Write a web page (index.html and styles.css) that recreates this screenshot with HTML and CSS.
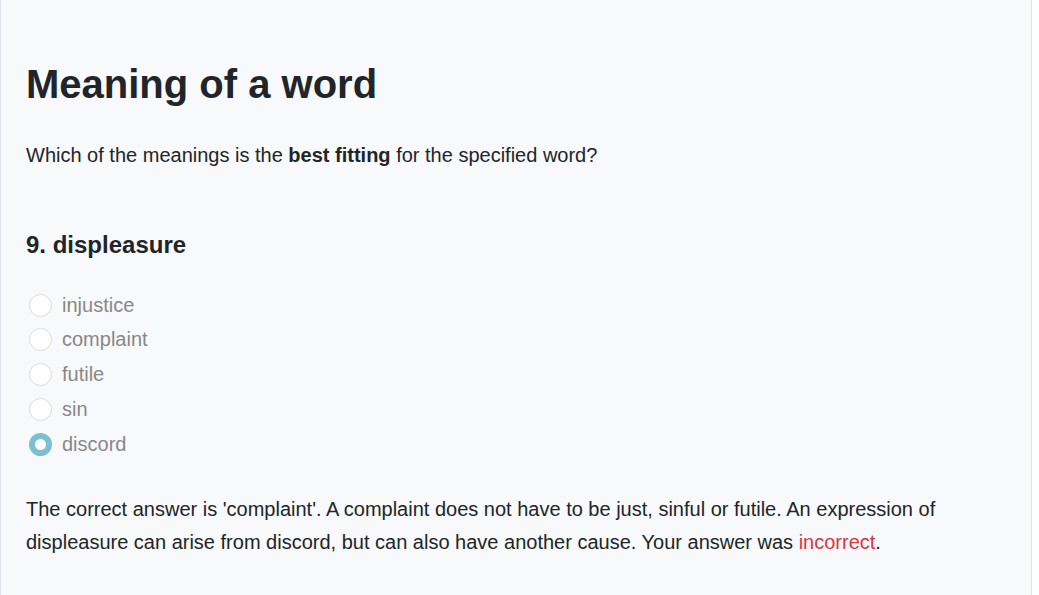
FILE: index.html
```html
<!DOCTYPE html>
<html lang="en">
<head>
  <meta charset="utf-8">
  <meta name="viewport" content="width=device-width, initial-scale=1.0">
  <title>Meaning of a word</title>
  <link rel="stylesheet" href="styles.css">
</head>
<body>
  <div class="container">
    <h1>Meaning of a word</h1>
    <p class="intro">Which of the meanings is the <strong>best fitting</strong> for the specified word?</p>

    <div class="question">
      <h3>9. displeasure</h3>

      <div class="options">
        <label class="option">
          <input type="radio" name="q9" value="injustice" disabled>
          <span>injustice</span>
        </label>
        <label class="option">
          <input type="radio" name="q9" value="complaint" disabled>
          <span>complaint</span>
        </label>
        <label class="option">
          <input type="radio" name="q9" value="futile" disabled>
          <span>futile</span>
        </label>
        <label class="option">
          <input type="radio" name="q9" value="sin" disabled>
          <span>sin</span>
        </label>
        <label class="option">
          <input type="radio" name="q9" value="discord" checked disabled>
          <span>discord</span>
        </label>
      </div>

      <p class="explanation">The correct answer is 'complaint'. A complaint does not have to be just, sinful or futile. An expression of displeasure can arise from discord, but can also have another cause. Your answer was <span class="wrong">incorrect</span>.</p>
    </div>
  </div>
</body>
</html>
```

FILE: styles.css
```css
* {
  box-sizing: border-box;
  margin: 0;
  padding: 0;
}

body {
  background: #fff;
  font-family: "Liberation Sans", Arial, sans-serif;
  color: #212529;
}

.container {
  width: 1032px;
  min-height: 100vh;
  background-color: #f8f9fa;
  border-left: 1px solid #dee2e6;
  border-right: 1px solid #dee2e6;
  padding: 60px 25px 40px;
}

h1 {
  font-size: 40px;
  font-weight: 700;
  line-height: 1.2;
  margin-bottom: 31px;
}

.intro,
.explanation {
  font-size: 20px;
  line-height: 33px;
}

.question h3 {
  font-size: 24px;
  font-weight: 700;
  line-height: 1.2;
  margin-top: 59px;
  margin-bottom: 28px;
}

.options {
  display: flex;
  flex-direction: column;
  margin-bottom: 31px;
}

.option {
  display: flex;
  align-items: center;
  gap: 10px;
  height: 34.75px;
  padding-left: 3px;
  font-size: 20px;
  color: #888;
}

.option input {
  appearance: none;
  -webkit-appearance: none;
  width: 23px;
  height: 23px;
  border-radius: 50%;
  border: 1px solid #dcdcdc;
  background: #fff;
  flex-shrink: 0;
}

.option input:checked {
  border: 6px solid #7cbfd2;
}

.wrong {
  color: #dc3545;
}
```
